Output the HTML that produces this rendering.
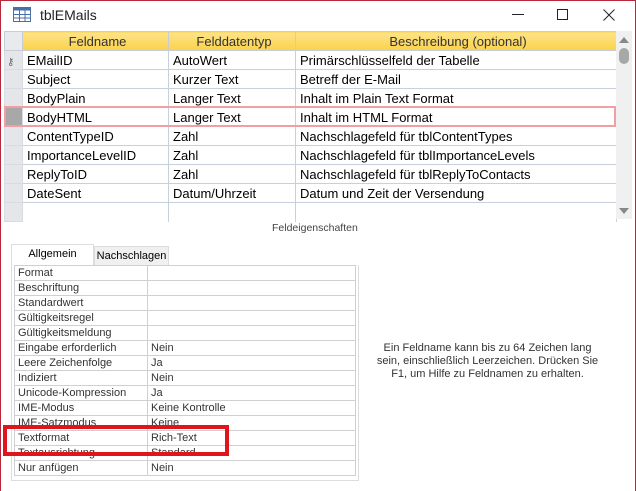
<!DOCTYPE html>
<html><head><meta charset="utf-8"><style>
*{margin:0;padding:0;box-sizing:border-box}
body{width:636px;height:491px;background:#fff;font-family:"Liberation Sans",sans-serif;position:relative;overflow:hidden}
.abs{position:absolute}
.win{left:0;top:0;width:636px;height:491px;border-left:1px solid #b8283c;border-right:1px solid #b8283c;border-top:1px solid #b8283c}
.title{left:40px;top:7px;font-size:14px;color:#222}
table{border-collapse:collapse}
.grid{left:4px;top:31px;font-size:13px}
.grid td{height:19px;border:1px solid #c8d0dc;padding:0 0 0 4px;white-space:nowrap;color:#000}
.grid tr.h td{background:linear-gradient(#fde48a,#fbd24a);text-align:center;color:#333;border-color:#c8ccd4}
.grid td.s{background:#e4e6ea;width:18px;padding:0;border-color:#d8dce2}
.props{left:14px;top:265px;font-size:11px;color:#333}
.props td{height:15px;border:1px solid #d0d0d0;padding:0 0 0 3px;white-space:nowrap}
</style></head><body>
<div class="abs win"></div>
<svg class="abs" style="left:13px;top:7px" width="18" height="15"><rect x="0.5" y="0.5" width="17" height="14" fill="#fff" stroke="#4a6ea8"/><rect x="0.5" y="0.5" width="17" height="3" fill="#4a6ea8"/><path d="M0 7.5H18M0 11H18M6.5 0V15M12 0V15" stroke="#4a6ea8"/></svg>
<div class="abs title">tblEMails</div>
<div class="abs" style="left:512px;top:14px;width:12px;height:1px;background:#222"></div>
<div class="abs" style="left:557px;top:9px;width:11px;height:11px;border:1px solid #222"></div>
<svg class="abs" style="left:603px;top:9px" width="12" height="12"><path d="M0.5 0.5L11.5 11.5M11.5 0.5L0.5 11.5" stroke="#222"/></svg>
<table class="abs grid">
<tr class="h"><td class="s" style="background:#e8eaee"></td><td style="width:146px">Feldname</td><td style="width:127px">Felddatentyp</td><td style="width:321px">Beschreibung (optional)</td></tr>
<tr><td class="s"><span style="font-size:10px;color:#666;padding-left:2px">⚷</span></td><td>EMailID</td><td>AutoWert</td><td>Primärschlüsselfeld der Tabelle</td></tr>
<tr><td class="s"></td><td>Subject</td><td>Kurzer Text</td><td>Betreff der E-Mail</td></tr>
<tr><td class="s"></td><td>BodyPlain</td><td>Langer Text</td><td>Inhalt im Plain Text Format</td></tr>
<tr><td class="s" style="background:#a8a8a8"></td><td>BodyHTML</td><td>Langer Text</td><td>Inhalt im HTML Format</td></tr>
<tr><td class="s"></td><td>ContentTypeID</td><td>Zahl</td><td>Nachschlagefeld für tblContentTypes</td></tr>
<tr><td class="s"></td><td>ImportanceLevelID</td><td>Zahl</td><td>Nachschlagefeld für tblImportanceLevels</td></tr>
<tr><td class="s"></td><td>ReplyToID</td><td>Zahl</td><td>Nachschlagefeld für tblReplyToContacts</td></tr>
<tr><td class="s"></td><td>DateSent</td><td>Datum/Uhrzeit</td><td>Datum und Zeit der Versendung</td></tr>
<tr><td class="s" style="height:18px"></td><td style="border-bottom:none"></td><td style="border-bottom:none"></td><td style="border-bottom:none"></td></tr>
</table>
<div class="abs" style="left:4px;top:106px;width:612px;height:21px;border:2px solid #f0a0a4"></div>
<div class="abs" style="left:616px;top:31px;width:16px;height:188px;background:#f0f0f0"></div>
<div class="abs" style="left:619px;top:48px;width:10px;height:16px;background:#a8a8a8;border-radius:5px"></div>
<svg class="abs" style="left:619px;top:36px" width="10" height="8"><path d="M0 7L5 1L10 7Z" fill="#888"/></svg>
<svg class="abs" style="left:619px;top:207px" width="10" height="8"><path d="M0 1L5 7L10 1Z" fill="#888"/></svg>
<div class="abs" style="left:272px;top:222px;font-size:10.5px;color:#444">Feldeigenschaften</div>
<div class="abs" style="left:11px;top:244px;width:83px;height:21px;border:1px solid #ddd;border-bottom:none;background:#fff;font-size:11px;text-align:center;line-height:19px;color:#000">Allgemein</div>
<div class="abs" style="left:94px;top:246px;width:75px;height:19px;border:1px solid #ddd;border-bottom:none;background:#f0f0f0;font-size:11px;text-align:center;line-height:19px;color:#000">Nachschlagen</div>
<div class="abs" style="left:11px;top:265px;width:348px;height:216px;border:1px solid #ddd;border-top:none"></div>
<table class="abs props">
<tr><td style="width:133px">Format</td><td style="width:208px"></td></tr>
<tr><td>Beschriftung</td><td></td></tr>
<tr><td>Standardwert</td><td></td></tr>
<tr><td>Gültigkeitsregel</td><td></td></tr>
<tr><td>Gültigkeitsmeldung</td><td></td></tr>
<tr><td>Eingabe erforderlich</td><td>Nein</td></tr>
<tr><td>Leere Zeichenfolge</td><td>Ja</td></tr>
<tr><td>Indiziert</td><td>Nein</td></tr>
<tr><td>Unicode-Kompression</td><td>Ja</td></tr>
<tr><td>IME-Modus</td><td>Keine Kontrolle</td></tr>
<tr><td>IME-Satzmodus</td><td>Keine</td></tr>
<tr><td>Textformat</td><td>Rich-Text</td></tr>
<tr><td>Textausrichtung</td><td>Standard</td></tr>
<tr><td>Nur anfügen</td><td>Nein</td></tr>
</table>
<div class="abs" style="left:3px;top:425px;width:226px;height:31px;border:4px solid #e0141c"></div>
<div class="abs" style="left:375px;top:342px;width:225px;font-size:11px;line-height:13px;text-align:center;color:#333">Ein Feldname kann bis zu 64 Zeichen lang sein, einschließlich Leerzeichen. Drücken Sie F1, um Hilfe zu Feldnamen zu erhalten.</div>
</body></html>
